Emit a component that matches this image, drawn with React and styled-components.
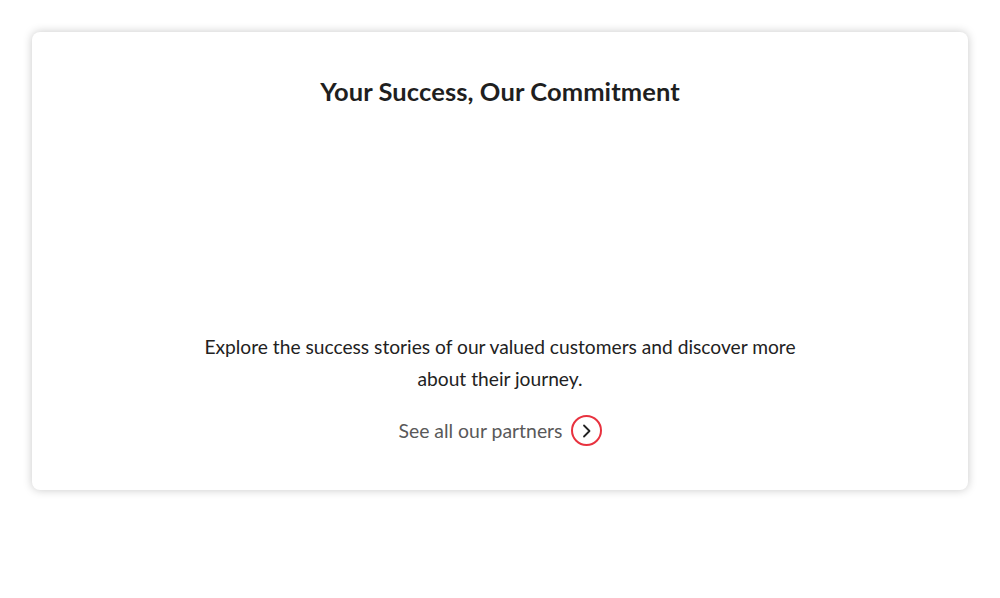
import styled, { createGlobalStyle } from "styled-components";

const GlobalStyle = createGlobalStyle`
  body {
    margin: 0;
    background: #fff;
    font-family: Lato, "Open Sans", sans-serif;
  }
`;

const Page = styled.div`
  padding: 32px;
`;

const Card = styled.section`
  background: #fff;
  border-radius: 8px;
  box-shadow: 0 0 10px rgba(0, 0, 0, 0.22);
  padding: 43px 32px 44px;
  display: flex;
  flex-direction: column;
  align-items: center;
  text-align: center;
`;

const Title = styled.h2`
  margin: 0;
  font-size: 25.5px;
  line-height: 32px;
  font-weight: 700;
  color: #1f1f1f;
  letter-spacing: 0.1px;
`;

const Showcase = styled.div`
  height: 224px;
  width: 100%;
`;

const Text = styled.p`
  margin: 0;
  max-width: 600px;
  font-size: 19.2px;
  line-height: 32px;
  color: #222;
`;

const Link = styled.a`
  margin-top: 20px;
  display: inline-flex;
  align-items: center;
  gap: 8px;
  font-size: 19.4px;
  line-height: 30px;
  color: #595959;
  text-decoration: none;
  cursor: pointer;
`;

const Circle = styled.span`
  width: 27px;
  height: 27px;
  border: 2px solid #e8323f;
  border-radius: 50%;
  display: flex;
  align-items: center;
  justify-content: center;
  color: #222;
`;

const App = () => {
  return (
    <>
      <GlobalStyle />
      <Page>
        <Card>
          <Title>Your Success, Our Commitment</Title>
          <Showcase />
          <Text>
            Explore the success stories of our valued customers and discover
            more about their journey.
          </Text>
          <Link>
            See all our partners
            <Circle>
              <svg width="16" height="16" viewBox="0 0 16 16" fill="none">
                <path
                  d="M6 2.5l5.5 5.5-5.5 5.5"
                  stroke="currentColor"
                  strokeWidth="1.8"
                  strokeLinecap="round"
                  strokeLinejoin="round"
                />
              </svg>
            </Circle>
          </Link>
        </Card>
      </Page>
    </>
  );
};

export default App;
